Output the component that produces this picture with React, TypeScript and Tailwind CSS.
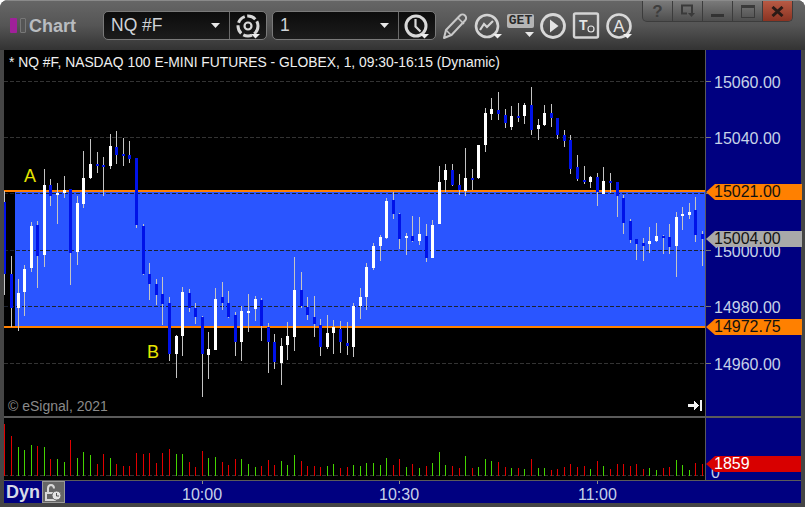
import React from "react";

type C = [number, number, number, number, number, number];
// x, wickTop, wickBottom, bodyTop, bodyBottom, colour (0 white, 1 blue)
const candles: C[] = [
  [4,191,295,202,274,1],[11,256,327,274,308,1],[18,279,331,293,308,0],[24,265,316,269,292,0],[31,222,272,226,268,0],[37,221,288,225,256,1],[44,169,267,185,255,0],[50,179,206,185,196,1],[57,183,224,193,195,0],[64,176,198,190,193,0],
  [70,189,285,189,253,1],[77,196,265,203,252,0],[83,151,208,178,204,0],[90,139,179,164,178,0],[97,152,173,164,166,1],[103,157,196,165,167,1],[110,134,169,146,166,0],[116,131,164,147,155,1],[123,138,166,154,156,1],[129,141,163,155,159,1],
  [136,158,228,158,225,1],[143,224,275,226,274,1],[149,263,300,274,284,1],[156,279,305,284,295,1],[162,277,325,294,304,1],[169,297,361,303,354,1],[176,335,378,336,354,0],[182,287,356,292,336,0],[189,289,312,293,308,1],[195,303,324,308,317,1],
  [202,316,397,317,354,1],[208,332,379,349,355,0],[215,288,350,299,350,0],[222,282,310,297,303,1],[228,291,318,303,317,1],[235,312,356,315,342,1],[241,306,361,311,342,0],[248,294,332,311,313,0],[255,296,321,299,309,0],[261,298,341,300,326,1],
  [268,323,373,327,342,1],[274,334,369,342,362,1],[281,338,385,346,363,0],[287,322,360,336,345,0],[294,257,351,290,337,0],[301,272,308,290,306,1],[307,297,320,307,315,1],[314,296,337,317,324,1],[320,319,356,325,347,1],[327,315,349,333,347,0],
  [333,320,354,327,333,0],[340,321,353,329,342,1],[347,322,355,343,346,1],[353,303,357,306,347,0],[360,288,319,297,306,0],[366,263,310,267,297,0],[373,243,270,246,268,0],[380,235,261,237,246,0],[386,198,239,201,238,0],[393,192,219,200,214,1],
  [399,213,249,214,239,1],[406,233,255,236,238,0],[412,216,242,236,241,1],[419,217,245,234,241,0],[426,224,262,236,258,1],[432,220,258,225,258,0],[439,166,224,182,224,0],[445,164,192,170,180,0],[452,164,186,170,185,1],[459,174,195,185,190,1],
  [465,148,196,178,191,0],[472,169,190,178,180,1],[478,145,179,145,178,0],[485,108,152,113,145,0],[491,98,120,109,114,0],[498,92,120,110,114,1],[505,109,128,115,123,1],[511,106,130,116,127,0],[518,103,122,116,118,1],[524,103,124,105,116,0],
  [531,87,135,105,130,1],[538,119,140,125,129,0],[544,105,126,113,125,0],[551,104,127,113,118,1],[557,118,139,118,135,1],[564,130,147,135,141,1],[570,135,174,140,169,1],[577,155,181,167,179,1],[584,166,184,180,182,1],[590,176,188,177,182,0],
  [597,173,206,177,192,1],[603,167,194,181,194,0],[610,173,193,181,183,1],[617,182,217,182,196,1],[623,195,234,198,223,1],[630,219,243,221,240,1],[636,239,260,239,244,1],[643,238,261,243,246,1],[649,227,253,241,244,0],[656,223,242,236,241,0],
  [663,235,254,236,238,1],[669,224,254,237,247,1],[676,212,277,217,246,0],[682,207,230,214,216,0],[689,203,219,212,215,0],[695,197,242,210,235,1],[702,231,266,234,239,1],
];

// x, height, colour (r / g)
const volume: [number, number, string][] = [
  [4,52,"r"],[11,40,"r"],[18,29,"g"],[24,26,"g"],[31,31,"g"],[37,30,"r"],[44,29,"g"],[50,17,"r"],[57,17,"g"],[64,14,"g"],[70,36,"r"],[77,18,"g"],[83,24,"g"],[90,21,"g"],[97,12,"r"],[103,22,"r"],[110,18,"g"],[116,12,"r"],[123,10,"r"],[129,10,"r"],[136,23,"r"],[143,22,"r"],[149,23,"r"],[156,13,"r"],[162,23,"r"],[169,27,"r"],[176,22,"g"],[182,22,"g"],[189,14,"r"],[195,9,"r"],[202,25,"r"],[208,18,"g"],[215,19,"g"],[222,14,"r"],[228,11,"r"],[235,17,"r"],[241,17,"g"],[248,12,"g"],[255,9,"g"],[261,10,"r"],[268,16,"r"],[274,11,"r"],[281,15,"g"],[287,11,"g"],[294,21,"g"],
  [301,15,"r"],[307,10,"r"],[314,10,"r"],[320,9,"r"],[327,10,"g"],[333,12,"g"],[340,8,"r"],[347,9,"r"],[353,11,"g"],[360,10,"g"],[366,13,"g"],[373,13,"g"],[380,11,"g"],[386,18,"g"],[393,11,"r"],[399,17,"r"],[406,9,"g"],[412,12,"r"],[419,8,"g"],[426,10,"r"],[432,13,"g"],[439,24,"g"],[445,11,"g"],[452,10,"r"],[459,8,"r"],[465,20,"g"],[472,8,"r"],[478,9,"g"],[485,17,"g"],[491,15,"g"],[498,14,"r"],[505,9,"r"],[511,8,"g"],[518,8,"r"],[524,7,"g"],[531,17,"r"],[538,8,"g"],[544,8,"g"],[551,6,"r"],[557,7,"r"],[564,9,"r"],[570,12,"r"],[577,9,"r"],[584,10,"r"],[590,7,"g"],[597,15,"r"],
  [603,10,"g"],[610,7,"r"],[617,12,"r"],[623,12,"r"],[630,10,"r"],[636,12,"r"],[643,7,"r"],[649,8,"g"],[656,6,"g"],[663,8,"r"],[669,9,"r"],[676,16,"g"],[682,11,"g"],[689,6,"g"],[695,13,"r"],[702,12,"r"],
];

const gridY = [81, 137, 193, 250, 306, 363];
const axisLabels: [string, number][] = [["15060.00", 81], ["15040.00", 137], ["15020.00", 193], ["15000.00", 250], ["14980.00", 306], ["14960.00", 363]];
const font = { fontFamily: '"Liberation Sans", Arial, sans-serif' };

function Caret({ className = "" }: { className?: string }) {
  return (
    <svg width="9" height="5" viewBox="0 0 9 5" className={className}>
      <path d="M0 0h9L4.5 5z" fill="#e8e8e8" />
    </svg>
  );
}

function Combo({ label, icon }: { label: string; icon: React.ReactNode }) {
  return (
    <div className="flex h-[29px] w-[164px] items-stretch rounded-[5px] border border-[#7a7a7a] bg-gradient-to-b from-[#0c0c0c] to-[#1c1c1c]">
      <div className="flex flex-1 items-center justify-between pl-[7px] pr-[9px] text-[17.5px] text-[#cfd3d8]">
        <span>{label}</span>
        <Caret />
      </div>
      <div className="flex w-[37px] items-center justify-center border-l border-[#6a6a6a]">{icon}</div>
    </div>
  );
}

function ToolIcon({ children, w = 28 }: { children: React.ReactNode; w?: number }) {
  return (
    <svg width={w} height="28" viewBox={`0 0 ${w} 28`} className="shrink-0">
      {children}
    </svg>
  );
}

const Down = ({ x, y }: { x: number; y: number }) => <path d={`M${x} ${y}h9l-4.5 4.5z`} fill="#eee" />;

function WinButton({ children, className = "" }: { children: React.ReactNode; className?: string }) {
  return (
    <div className={`flex h-full w-[30px] items-center justify-center border-r border-[#3c3c3c] ${className}`}>{children}</div>
  );
}

function Flag({ text, y, bg, color = "#111" }: { text: string; y: number; bg: string; color?: string }) {
  return (
    <div
      className="absolute left-0 flex h-[16px] w-[96px] items-center pl-[8px] text-[16px] leading-none [clip-path:polygon(0_50%,9px_0,100%_0,100%_100%,9px_100%)]"
      style={{ top: y, background: bg, color }}
    >
      {text}
    </div>
  );
}

export default function App() {
  return (
    <div className="h-[507px] w-[805px] overflow-hidden bg-white" style={font}>
      <div className="flex h-full w-full flex-col overflow-hidden rounded-t-[8px] bg-[#454545]">
        {/* title bar */}
        <div className="flex h-[50px] shrink-0 items-center border-t border-[#8a8a8a] bg-gradient-to-b from-[#666666] via-[#555555] to-[#333333] pl-[10px]">
          <div className="h-[15px] w-[7px] rounded-[1px] bg-[#a0209a]" />
          <div className="ml-[3px] h-[15px] w-[6px] rounded-[1px] border border-[#777] bg-[#555]" />
          <span className="ml-[3px] w-[74px] text-[18px] font-bold leading-none text-[#b9bcc0]">Chart</span>
          <Combo
            label="NQ #F"
            icon={
              <ToolIcon w={28}>
                <circle cx="14" cy="14" r="10" fill="none" stroke="#d8d8d8" strokeWidth="3" strokeDasharray="9 2.5" />
                <circle cx="14" cy="14" r="3.5" fill="none" stroke="#d8d8d8" strokeWidth="2.2" />
                <Down x={17} y={22} />
              </ToolIcon>
            }
          />
          <div className="ml-[5px]">
            <Combo
              label="1"
              icon={
                <ToolIcon w={28}>
                  <circle cx="13" cy="14" r="10" fill="none" stroke="#d8d8d8" strokeWidth="3" />
                  <path d="M12.5 7v7.5l5 5" fill="none" stroke="#d8d8d8" strokeWidth="2.2" />
                  <Down x={17} y={22} />
                </ToolIcon>
              }
            />
          </div>
          <div className="ml-[6px] flex items-center">
            <ToolIcon>
              <path d="M2 26l2-8L18 3.5c1.5-1.5 3.5-1.5 5 0s1.500 3.500 0 5L9.500 23z" fill="none" stroke="#c8c8c8" strokeWidth="2" strokeLinejoin="round" />
              <path d="M16 6l6 6M4 18l5 5" stroke="#c8c8c8" strokeWidth="1.500" />
            </ToolIcon>
            <div className="ml-[4px]">
              <ToolIcon w={30}>
                <circle cx="13" cy="14" r="11" fill="none" stroke="#d4d4d4" strokeWidth="2.600" />
                <path d="M6 18l4-6 3 3 6-6" fill="none" stroke="#d4d4d4" strokeWidth="2.200" />
                <Down x={19} y={22} />
              </ToolIcon>
            </div>
            <div className="relative ml-[3px] h-[28px] w-[28px] shrink-0">
              <div className="mt-[2px] flex h-[14px] w-[27px] items-center justify-center rounded-[2px] bg-[#b5b5b5] font-['Liberation_Mono'] text-[13px] font-bold leading-none text-[#2a2a2a]">
                GET
              </div>
              <Caret className="absolute left-[18px] top-[20px]" />
            </div>
            <div className="ml-[4px]">
              <ToolIcon>
                <circle cx="14" cy="14" r="11.500" fill="none" stroke="#d8d8d8" strokeWidth="2.800" />
                <path d="M11 7.500L19.500 14 11 20.500z" fill="#e4e4e4" />
              </ToolIcon>
            </div>
            <div className="ml-[5px]">
              <ToolIcon>
                <rect x="2" y="1.500" width="24" height="24" rx="1.500" fill="none" stroke="#d4d4d4" strokeWidth="2.400" />
                <text x="7" y="18" fontSize="14" fontWeight="700" fill="#e4e4e4" fontFamily="Liberation Sans">T</text>
                <circle cx="19" cy="17" r="3" fill="none" stroke="#e4e4e4" strokeWidth="1.200" />
              </ToolIcon>
            </div>
            <div className="ml-[6px]">
              <ToolIcon>
                <circle cx="13" cy="14" r="11.500" fill="none" stroke="#d8d8d8" strokeWidth="2.600" />
                <text x="13" y="20" textAnchor="middle" fontSize="17" fill="#e4e4e4" fontFamily="Liberation Sans">A</text>
                <Down x={17} y={22} />
              </ToolIcon>
            </div>
          </div>
          {/* window buttons */}
          <div className="mb-[28px] ml-[8px] flex h-[21px] w-[151px] shrink-0 overflow-hidden rounded-b-[5px] border border-t-0 border-[#3c3c3c] bg-gradient-to-b from-[#7a7a7a] to-[#4e4e4e]">
            <WinButton>
              <span className="text-[17px] font-bold leading-none text-[#3e3e3e]">?</span>
            </WinButton>
            <WinButton>
              <svg width="16" height="14" viewBox="0 0 16 14">
                <path d="M12 9V1.500H2v8h5" fill="none" stroke="#3a3a3a" strokeWidth="2" />
                <path d="M8 9h7l-3.500 4z" fill="#3a3a3a" />
              </svg>
            </WinButton>
            <WinButton>
              <div className="mt-[8px] h-[3px] w-[13px] bg-[#333]" />
            </WinButton>
            <WinButton>
              <div className="h-[13px] w-[14px] border border-t-[3px] border-[#3a3a3a]" />
            </WinButton>
            <div className="flex h-full flex-1 items-center justify-center bg-gradient-to-b from-[#b85a44] to-[#8a3322]">
              <svg width="13" height="11" viewBox="0 0 13 11">
                <path d="M1.500 1l10 9M11.500 1l-10 9" stroke="#2a1a16" strokeWidth="3" />
              </svg>
            </div>
          </div>
        </div>

        {/* panes */}
        <div className="flex min-h-0 flex-1 flex-col pb-[4px] pl-[4px] pr-[4px]">
          {/* price pane */}
          <div className="flex h-[366px] shrink-0">
            <div className="relative h-full w-[701px] shrink-0 bg-black">
              <svg width="701" height="366" viewBox="4 50 701 366" shapeRendering="crispEdges" className="block">
                <rect x="15" y="190" width="690" height="138" fill="#2a55ff" />
                <rect x="4" y="190" width="701" height="2" fill="#ff8000" />
                <rect x="4" y="326" width="701" height="2" fill="#ff8000" />
                {gridY.map((y) => (
                  <line key={y} x1="4" x2="705" y1={y + 0.5} y2={y + 0.5} stroke={y > 190 && y < 326 ? "#1c2230" : "#333333"} strokeDasharray="4 2" />
                ))}
                {candles.map(([x, wt, wb, bt, bb, c]) => (
                  <g key={x}>
                    <rect x={x} y={wt} width="1" height={wb - wt} fill="#c4c4c4" />
                    <rect x={x - 1} y={bt} width="3" height={bb - bt} fill={c ? "#0012e8" : "#ffffff"} />
                  </g>
                ))}
                <path d="M688 404h6v-3.500l5 5-5 5V407h-6z M700 400h2v11h-2z" fill="#f2f2f2" />
              </svg>
              <div className="absolute left-[5px] top-[3px] whitespace-nowrap text-[13.85px] leading-[18px] text-[#f0f0f0]">
                * NQ #F, NASDAQ 100 E-MINI FUTURES - GLOBEX, 1, 09:30-16:15 (Dynamic)
              </div>
              <div className="absolute left-[20px] top-[117px] text-[18px] leading-none text-[#e6e600]">A</div>
              <div className="absolute left-[143px] top-[293px] text-[18px] leading-none text-[#e6e600]">B</div>
              <div className="absolute bottom-[2px] left-[4px] text-[14px] leading-[16px] text-[#8a8a8a]">© eSignal, 2021</div>
            </div>
            <div className="relative h-full flex-1 border-l border-[#5a5a5a] bg-[#000080] text-[16px] text-[#c6d2e8]">
              {axisLabels.map(([t, y]) => (
                <div key={t} className="absolute left-0 flex h-[16px] items-center" style={{ top: y - 58 }}>
                  <span className="h-px w-[5px] bg-[#7a7a7a]" />
                  <span className="ml-[3px] mt-[3px] leading-none">{t}</span>
                </div>
              ))}
              <Flag text="15021.00" y={134} bg="#ff8000" />
              <Flag text="15004.00" y={181} bg="#a9a9a9" />
              <Flag text="14972.75" y={269} bg="#ff8000" />
            </div>
          </div>
          {/* divider */}
          <div className="h-[2px] shrink-0 bg-[#5a5a5a]" />
          {/* volume pane */}
          <div className="flex h-[62px] shrink-0">
            <div className="h-full w-[701px] shrink-0 bg-black">
              <svg width="701" height="62" viewBox="4 418 701 62" shapeRendering="crispEdges" className="block">
                <line x1="4" x2="705" y1="475.500" y2="475.500" stroke="#333333" strokeDasharray="4 2" />
                {volume.map(([x, h, c]) => (
                  <rect key={x} x={x} y={476 - h} width="1" height={h} fill={c === "r" ? "#e00000" : "#44d400"} />
                ))}
              </svg>
            </div>
            <div className="relative h-full flex-1 overflow-hidden border-l border-[#5a5a5a] bg-[#000080] text-[16px] text-[#c6d2e8]">
              <span className="absolute left-[5px] top-[47px] leading-none">0</span>
              <Flag text="1859" y={38} bg="#d80000" color="#ffffff" />
            </div>
          </div>
          {/* time axis */}
          <div className="relative flex h-[23px] shrink-0 items-center border-t border-[#5a5a5a] bg-[#000080] text-[16px] text-[#c6d2e8]">
            <span className="ml-[2px] w-[36px] text-[18px] font-bold leading-none text-[#d6dae6]">Dyn</span>
            <div className="flex h-[22px] w-[23px] items-center justify-center border border-[#9a9a9a] bg-[#666]">
              <svg width="19" height="19" viewBox="0 0 19 19">
                <path d="M2 17V10h9v7zM4 10V5.500C4 3 5.500 2 7 2s3 1 3 3.500" fill="none" stroke="#d8d8d8" strokeWidth="2" />
                <circle cx="12.500" cy="12.500" r="4.500" fill="#e4e4e4" stroke="#666" />
                <path d="M12.500 10v3h2.500" fill="none" stroke="#555" />
              </svg>
            </div>
            <span className="absolute left-[178px] top-[6px] leading-none">10:00</span>
            <span className="absolute left-[375px] top-[6px] leading-none">10:30</span>
            <span className="absolute left-[574px] top-[6px] leading-none">11:00</span>
            <span className="absolute left-[198px] top-0 h-[3px] w-px bg-[#8a8a8a]" />
            <span className="absolute left-[395px] top-0 h-[3px] w-px bg-[#8a8a8a]" />
            <span className="absolute left-[593px] top-0 h-[3px] w-px bg-[#8a8a8a]" />
          </div>
        </div>
      </div>
    </div>
  );
}
